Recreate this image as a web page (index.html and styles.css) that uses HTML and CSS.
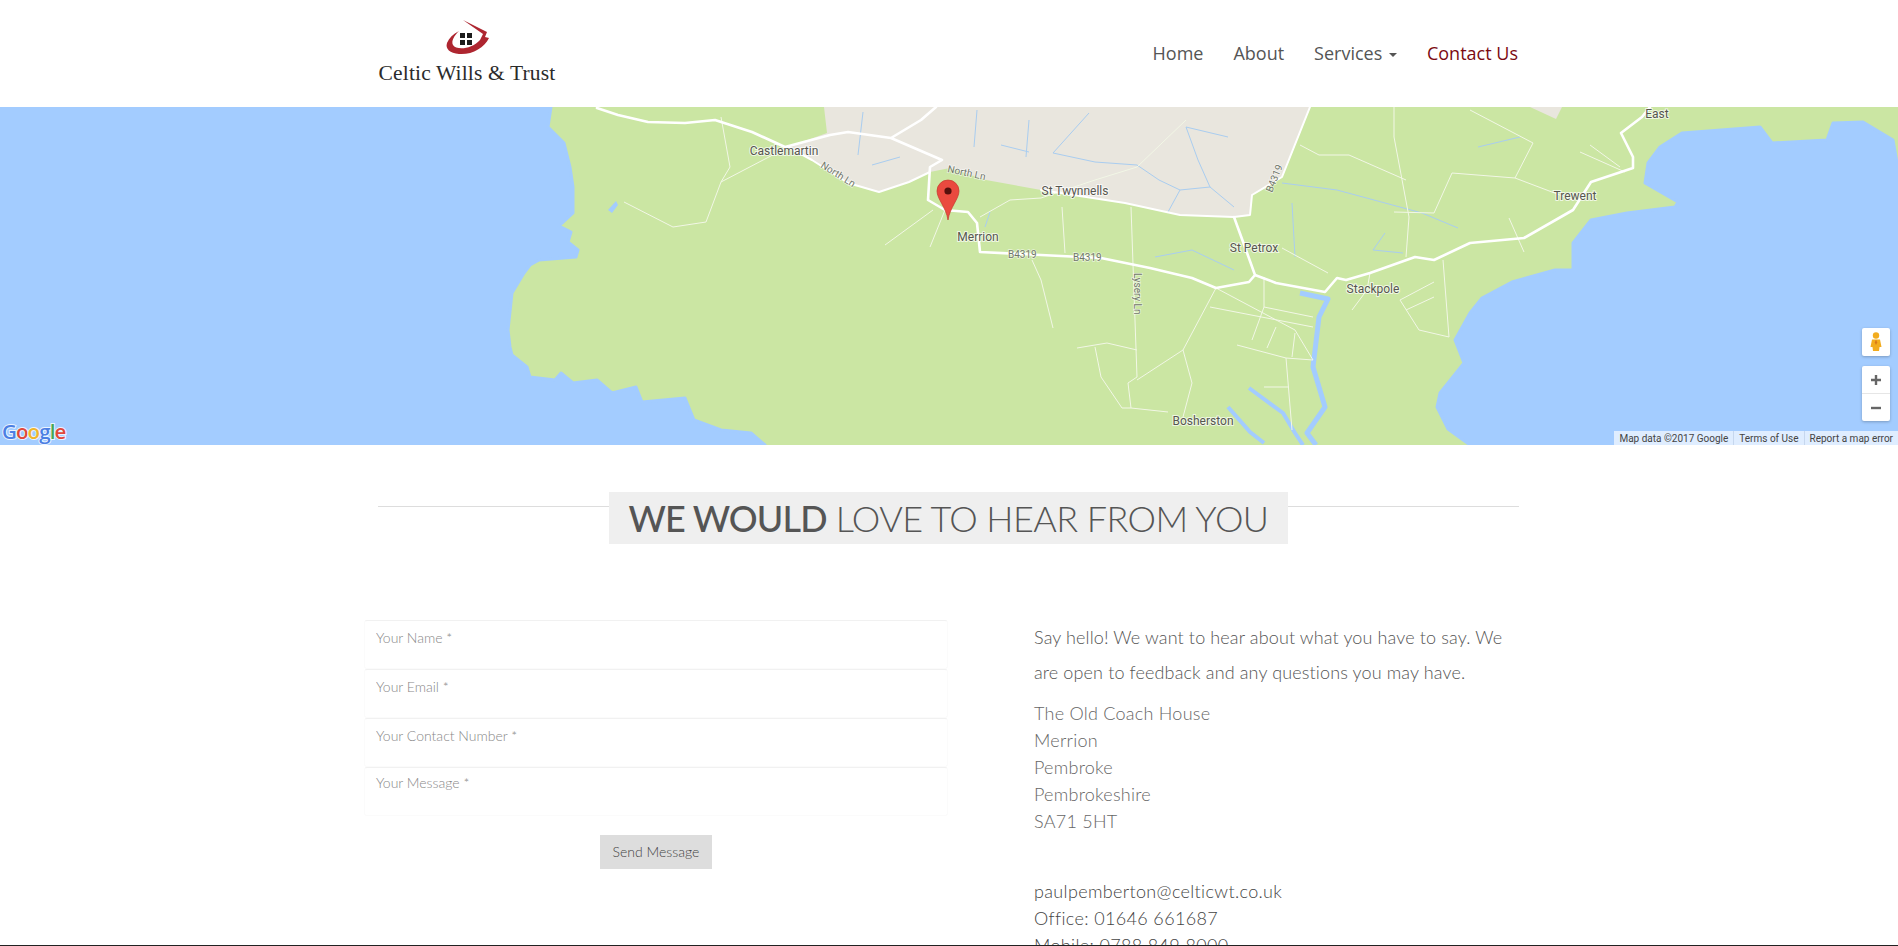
FILE: index.html
```html
<!DOCTYPE html>
<html lang="en">
  <head>
    <meta charset="UTF-8" />
    <meta name="viewport" content="width=device-width, initial-scale=1.0" />
    <title>Contact Us - Celtic Wills &amp; Trust</title>
    <link rel="stylesheet" href="styles.css">
  </head>
  <body>
    <header class="site-header">
      <div class="container header-row">
        <a class="logo" href="#">
          <svg class="logo-mark" viewBox="440 15 55 45" width="55" height="45">
            <path class="logo-red" d="M463 20 L487 32 L485 37 L489 38 C484 48 472 55 459 54 C450 53 445 49 447 43 C449 38 453 34 459 31 C454 36 451 41 453 45 C456 50 471 50 480 40 L483 34 Z" />
            <rect class="logo-win" x="460" y="33" width="5" height="5" />
            <rect class="logo-win" x="467" y="33" width="5" height="5" />
            <rect class="logo-win" x="460" y="40" width="5" height="5" />
            <rect class="logo-win" x="467" y="40" width="5" height="5" />
          </svg>
          <span class="logo-name">Celtic Wills &amp; Trust</span>
        </a>
        <nav>
          <ul class="nav-list">
            <li><a href="#">Home</a></li>
            <li><a href="#">About</a></li>
            <li><a href="#">Services <span class="caret"></span></a></li>
            <li><a class="active" href="#">Contact Us</a></li>
          </ul>
        </nav>
      </div>
    </header>

    <section class="map">
      <svg class="map-canvas" viewBox="0 0 1898 338" width="1898" height="338">
        <rect class="land" width="1898" height="338" />

        <!-- high ground -->
        <path class="urban" d="M824 0 L827 26 L788 40 L812 53 L848 76 L879 85 L909 75 L930 65 L950 61 L986 73 L1041 83 L1125 96 L1180 108 L1234 110 L1250 108 L1252 88 L1282 70 L1310 0 Z" />
        <path class="urban" d="M1530 0 L1556 12 L1562 0 Z" />

        <!-- sea -->
        <path class="water" d="M0 0 L551 0 L548 20 L564 36 L570 60 L573 80 L573 106 L559 119 L571 125 L568 135 L578 143 L576 150 L539 153 L530 158 L524 166 L512 186 L508 223 L510 240 L512 248 L527 260 L530 270 L555 273 L561 266 L573 276 L597 273 L612 286 L636 280 L642 295 L685 291 L694 313 L721 323 L751 326 L765 338 L0 338 Z" />
        <path class="water" d="M1470 338 L1448 322 L1437 300 L1440 286 L1464 256 L1455 233 L1470 206 L1482 191 L1512 175 L1555 163 L1573 163 L1573 136 L1591 113 L1627 106 L1675 100 L1678 95 L1645 76 L1648 56 L1660 40 L1682 26 L1760 20 L1772 36 L1827 33 L1833 16 L1863 15 L1893 33 L1898 61 L1898 338 Z" />
        <path class="pond" d="M608 103 L616 94 L618 98 L612 106 Z" />

        <!-- estuary -->
        <path class="estuary" d="M1300 186 L1328 192 L1319 210 L1313 260 L1325 300 L1307 326 L1316 338" />
        <path class="estuary thin" d="M1249 281 L1283 306 L1295 326 L1303 338" />
        <path class="estuary thin" d="M1228 300 L1250 325 L1264 336" />

        <!-- streams -->
        <path class="stream" d="M1053 46 L1089 6 M1053 46 L1095 55 L1137 58 L1159 73 L1180 83 L1210 80 L1234 100 M1186 20 L1198 53 L1210 80 M1228 30 L1186 20 M1029 13 L1026 50 M977 3 L974 40 M1001 38 L1029 45 M1180 83 L1168 105 M1282 76 L1337 83 L1422 106 L1458 121 M1292 96 L1295 150 M1385 126 L1373 143 L1403 146 M1155 150 L1192 143 L1234 163 M1478 40 L1520 30 M863 5 L858 48 M900 50 L872 58 M985 120 L990 105" />

        <!-- minor roads -->
        <path class="lane" d="M721 10 L730 60 L721 75 L788 40 M721 75 L706 115 L673 120 L624 95 M933 103 L885 138 M945 103 L930 140 M980 110 L1010 93 L1041 91 L1095 73 L1137 60 L1186 13 M1062 100 L1065 146 M1131 100 L1137 270 L1128 276 L1131 301 L1168 305 M1032 153 L1041 173 L1053 221 M1077 241 L1107 236 L1137 243 M1095 240 L1101 270 L1122 301 L1131 301 M1216 181 L1183 243 L1137 273 M1183 243 L1192 276 L1183 310 M1216 181 L1295 223 L1313 253 M1210 200 L1313 220 M1264 170 L1264 200 L1252 233 M1237 238 L1286 251 L1313 253 M1276 220 L1267 241 M1295 226 L1292 250 M1264 200 L1313 210 M1286 251 L1292 323 M1264 280 L1289 280 M1370 166 L1367 183 L1352 203 M1443 153 L1449 230 L1419 223 L1400 193 L1434 175 M1406 203 L1434 190 M1300 38 L1319 48 L1349 48 L1406 73 M1394 0 L1394 30 L1409 110 L1406 150 M1470 3 L1533 36 L1515 71 L1452 66 L1434 106 L1394 105 M1515 71 L1573 93 M1509 111 L1524 145 M1282 141 L1328 166 M1580 45 L1625 65 M1590 38 L1620 60" />

        <!-- main roads -->
        <path class="road" d="M597 1 L618 8 L648 15 L685 16 L715 13 L752 25 L785 40 L830 28 L848 25 L891 31 L921 13 L936 0 M891 31 L942 53 L930 60 L928 93 L945 103 L968 105 L977 116 L980 145 L1041 148 L1101 151 L1150 161 L1192 171 L1216 181 L1249 175 L1255 168 L1276 176 L1325 185 L1337 171 L1346 173 L1370 166 L1415 150 L1434 153 L1470 136 L1524 131 L1573 103 L1591 75 L1633 61 L1633 50 L1621 26 L1642 10 L1650 0 M1234 110 L1246 143 L1255 168" />
        <path class="road edge" d="M788 40 L812 53 L848 76 L879 85 L909 75 L930 65 M1041 83 L1125 96 L1180 108 L1234 110 L1250 108 L1252 88 L1282 70 L1310 0" />

        <!-- place names -->
        <text class="place" x="784" y="48">Castlemartin</text>
        <text class="place" x="1075" y="88">St Twynnells</text>
        <text class="place" x="978" y="134">Merrion</text>
        <text class="place" x="1254" y="145">St Petrox</text>
        <text class="place" x="1373" y="186">Stackpole</text>
        <text class="place" x="1575" y="93">Trewent</text>
        <text class="place" x="1657" y="11">East</text>
        <text class="place" x="1203" y="318">Bosherston</text>
        <text class="street" x="0" y="0" transform="translate(820 60) rotate(32)">North Ln</text>
        <text class="street" x="0" y="0" transform="translate(947 65) rotate(12)">North Ln</text>
        <text class="street" x="0" y="0" transform="translate(1134 166) rotate(90)">Lysery Ln</text>
        <text class="street" x="1008" y="151">B4319</text>
        <text class="street" x="1073" y="154">B4319</text>
        <text class="street" x="0" y="0" transform="translate(1272 86) rotate(-68)">B4319</text>

        <!-- marker -->
        <path class="pin" d="M948 113 C946 100 937 92 937 84 A11 11 0 0 1 959 84 C959 92 950 100 948 113 Z" />
        <circle class="pin-dot" cx="948" cy="84" r="3.6" />

        <text class="google-logo" x="2" y="332"><tspan class="g-blue">G</tspan><tspan class="g-red">o</tspan><tspan class="g-yellow">o</tspan><tspan class="g-blue">g</tspan><tspan class="g-green">l</tspan><tspan class="g-red">e</tspan></text>
      </svg>

      <div class="map-btn pegman">
        <svg viewBox="0 0 28 28" width="28" height="28">
          <circle class="peg-fill" cx="14" cy="7.5" r="3.2" />
          <path class="peg-fill" d="M10 11.5 H18 L19.5 19 H17.5 L17 23 H11 L10.5 19 H8.5 Z" />
          <path class="peg-mark" d="M14 11.5 L15.2 14.5 L14 17 L12.8 14.5 Z" />
        </svg>
      </div>
      <div class="map-btn zoom">
        <span class="zoom-key">
          <svg viewBox="0 0 12 12" width="12" height="12"><path class="zoom-icon" d="M6 1 V11 M1 6 H11" /></svg>
        </span>
        <span class="zoom-key">
          <svg viewBox="0 0 12 12" width="12" height="12"><path class="zoom-icon" d="M1 6 H11" /></svg>
        </span>
      </div>
      <div class="attribution">
        <span>Map data ©2017 Google</span>
        <span>Terms of Use</span>
        <span>Report a map error</span>
      </div>
    </section>

    <main class="container">
      <div class="title-rule">
        <h2 class="title"><b>WE WOULD</b> LOVE TO HEAR FROM YOU</h2>
      </div>

      <div class="contact-row">
        <form class="contact-form">
          <input class="field" type="text" placeholder="Your Name *" />
          <input class="field" type="text" placeholder="Your Email *" />
          <input class="field" type="text" placeholder="Your Contact Number *" />
          <textarea class="field field-area" placeholder="Your Message *"></textarea>
          <button class="send" type="button">Send Message</button>
        </form>

        <div class="contact-info">
          <p class="intro">Say hello! We want to hear about what you have to say. We are open to feedback and any questions you may have.</p>
          <address class="address">
            The Old Coach House<br />
            Merrion<br />
            Pembroke<br />
            Pembrokeshire<br />
            SA71 5HT
          </address>
          <p class="phones">
            paulpemberton@celticwt.co.uk<br />
            Office: 01646 661687<br />
            Mobile: 0788 849 8000
          </p>
        </div>
      </div>
    </main>

    <div class="page-edge"></div>
  </body>
</html>
```

FILE: styles.css
```css
* {
  margin: 0;
  padding: 0;
  box-sizing: border-box;
}

html,
body {
  height: 100vh;
  overflow: hidden;
}

body {
  background-color: #fff;
  font-family: "Lato", "Liberation Sans", sans-serif;
  font-weight: 300;
  color: #555;
}

a {
  text-decoration: none;
}

.container {
  width: 1170px;
  margin: 0 auto;
}

/* header */
.site-header {
  height: 107px;
}

.header-row {
  height: 107px;
  padding: 0 16px 0 14px;
  display: flex;
  justify-content: space-between;
  align-items: center;
}

.logo {
  display: flex;
  flex-direction: column;
  align-items: center;
  align-self: flex-start;
  width: 178px;
  padding-top: 15px;
}

.logo-mark {
  display: block;
}

.logo-red {
  fill: #ae2630;
}

.logo-win {
  fill: #1c1c1c;
}

.logo-name {
  font-family: "Liberation Serif", serif;
  font-size: 21.5px;
  line-height: 26px;
  letter-spacing: 0.15px;
  color: #2b2b2b;
  white-space: nowrap;
}

.nav-list {
  display: flex;
  list-style: none;
  gap: 30px;
  margin-top: -2px;
}

.nav-list a {
  font-family: "Open Sans", sans-serif;
  font-weight: 400;
  font-size: 18px;
  color: #555;
}

.nav-list a.active {
  color: #7b0a12;
}

.caret {
  display: inline-block;
  width: 0;
  height: 0;
  margin-left: 2px;
  vertical-align: middle;
  border-top: 4px solid #555;
  border-left: 4px solid transparent;
  border-right: 4px solid transparent;
}

/* map */
.map {
  position: relative;
  height: 338px;
  overflow: hidden;
}

.map-canvas {
  display: block;
}

.land {
  fill: #cbe6a3;
}

.urban {
  fill: #e9e6de;
}

.water {
  fill: #a3ccff;
  stroke: #a3ccff;
  stroke-width: 3;
  stroke-linejoin: round;
}

.pond {
  fill: #a3ccff;
}

.estuary {
  fill: none;
  stroke: #a3ccff;
  stroke-width: 5;
  stroke-linejoin: round;
}

.estuary.thin {
  stroke-width: 4;
}

.stream {
  fill: none;
  stroke: #a9cdf0;
  stroke-width: 1;
}

.lane {
  fill: none;
  stroke: #f2f7e6;
  stroke-width: 1;
  stroke-linejoin: round;
}

.road {
  fill: none;
  stroke: #fff;
  stroke-width: 2.6;
  stroke-linejoin: round;
  stroke-linecap: round;
}

.road.edge {
  stroke-width: 2;
}

.place {
  font-family: "Roboto", sans-serif;
  font-weight: 400;
  font-size: 12px;
  text-anchor: middle;
  fill: #56564f;
  stroke: #fff;
  stroke-width: 2px;
  stroke-opacity: 0.7;
  paint-order: stroke;
}

.street {
  font-family: "Roboto", sans-serif;
  font-weight: 400;
  font-size: 10px;
  fill: #71776a;
  stroke: #fff;
  stroke-width: 1.5px;
  stroke-opacity: 0.6;
  paint-order: stroke;
}

.pin {
  fill: #ea4a3f;
  stroke: #c5362c;
  stroke-width: 0.7;
}

.pin-dot {
  fill: #55100c;
}

.google-logo {
  font-family: "Open Sans", sans-serif;
  font-weight: 600;
  font-size: 20.5px;
  letter-spacing: -0.9px;
  stroke: #fff;
  stroke-width: 2px;
  stroke-opacity: 0.8;
  paint-order: stroke;
}

.g-blue {
  fill: #4c7fe3;
}

.g-red {
  fill: #e0483c;
}

.g-yellow {
  fill: #efb62c;
}

.g-green {
  fill: #46a755;
}

.map-btn {
  position: absolute;
  left: 1862px;
  width: 28px;
  background-color: #fff;
  border-radius: 2px;
  box-shadow: 0 1px 3px rgba(0, 0, 0, 0.25);
}

.pegman {
  top: 221px;
  height: 28px;
}

.peg-fill {
  fill: #f2ac1e;
}

.peg-mark {
  fill: #d9771a;
}

.zoom {
  top: 259px;
  height: 55px;
  display: flex;
  flex-direction: column;
}

.zoom-key {
  flex: 1;
  display: flex;
  align-items: center;
  justify-content: center;
}

.zoom-key + .zoom-key {
  border-top: 1px solid #e6e6e6;
}

.zoom-icon {
  fill: none;
  stroke: #666;
  stroke-width: 2.4;
}

.attribution {
  position: absolute;
  right: 0;
  bottom: 0;
  height: 14px;
  display: flex;
  background-color: rgba(255, 255, 255, 0.65);
  font-family: "Roboto", sans-serif;
  font-weight: 400;
  font-size: 10px;
  line-height: 15px;
  color: #444;
}

.attribution span {
  padding: 0 5px;
}

.attribution span + span {
  border-left: 1px solid #c6d7ee;
}

/* heading */
.title-rule {
  margin: 47px 15px 0 14px;
  height: 52px;
  display: flex;
  justify-content: center;
  background: linear-gradient(#ddd, #ddd) 0 14px / 100% 1px no-repeat;
}

.title {
  width: 679px;
  height: 52px;
  background-color: #efefef;
  text-align: center;
  font-weight: 300;
  font-size: 36px;
  line-height: 53px;
  letter-spacing: -0.6px;
  color: #555;
  white-space: nowrap;
}

.title b {
  font-weight: 500;
  letter-spacing: -0.9px;
}

/* contact */
.contact-row {
  display: flex;
  margin-top: 76px;
}

.contact-form {
  width: 584px;
  display: flex;
  flex-direction: column;
  align-items: center;
}

.field {
  display: block;
  width: 100%;
  height: 49px;
  padding: 0 11px 15px;
  border: 1px solid #fbfbfb;
  border-top-color: #f1f1f1;
  border-radius: 3px;
  background-color: #fff;
  outline: none;
  font-family: "Lato", sans-serif;
  font-weight: 300;
  font-size: 14px;
  color: #555;
}

.field::placeholder {
  color: #888;
  opacity: 1;
}

.field-area {
  padding-top: 5px;
  padding-bottom: 0;
  resize: none;
  line-height: 20px;
}

.send {
  width: 112px;
  height: 34px;
  margin-top: 19px;
  border: none;
  background-color: #ddd;
  font-family: "Lato", sans-serif;
  font-weight: 300;
  font-size: 14px;
  color: #444;
  padding-bottom: 2px;
}

.contact-info {
  width: 484px;
  margin-left: 86px;
  font-size: 18px;
  color: #555;
}

.intro {
  line-height: 35px;
  letter-spacing: 0.13px;
  margin-bottom: 10px;
}

.address {
  font-style: normal;
  line-height: 27px;
  letter-spacing: 0.25px;
  color: #666;
  margin-top: 3px;
}

.phones {
  line-height: 27px;
  letter-spacing: 0.35px;
  margin-top: 43px;
  color: #444;
}

/* thin dark strip along the bottom of the window */
.page-edge {
  position: fixed;
  left: 0;
  right: 0;
  bottom: 0;
  height: 1px;
  background-color: #222;
}
```
